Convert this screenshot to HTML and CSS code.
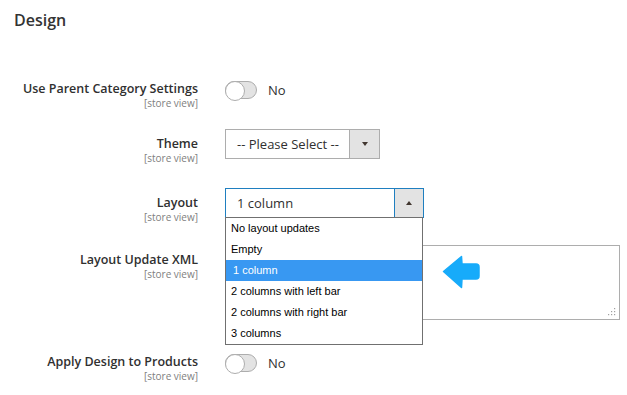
FILE: index.html
```html
<!DOCTYPE html>
<html lang="en">
<head>
<meta charset="utf-8">
<title>Design</title>
<link rel="stylesheet" href="styles.css">
</head>
<body>
<main class="page">
  <h2 class="title">Design</h2>
  <div class="fields">
    <div class="field field-switch field-first">
      <div class="label"><span class="label-text">Use Parent Category Settings</span><span class="scope">[store view]</span></div>
      <div class="control control-switch">
        <span class="toggle"></span><span class="toggle-text">No</span>
      </div>
    </div>

    <div class="field">
      <div class="label"><span class="label-text">Theme</span><span class="scope">[store view]</span></div>
      <div class="control">
        <div class="select select-theme">
          <span class="select-value">-- Please Select --</span>
          <span class="select-btn"><span class="tri tri-down"></span></span>
        </div>
      </div>
    </div>

    <div class="field field-layout">
      <div class="label"><span class="label-text">Layout</span><span class="scope">[store view]</span></div>
      <div class="control">
        <div class="select select-layout is-open">
          <span class="select-value">1 column</span>
          <span class="select-btn"><span class="tri tri-up"></span></span>
          <ul class="options">
            <li class="option">No layout updates</li>
            <li class="option">Empty</li>
            <li class="option is-selected">1 column</li>
            <li class="option">2 columns with left bar</li>
            <li class="option">2 columns with right bar</li>
            <li class="option">3 columns</li>
          </ul>
        </div>
      </div>
    </div>

    <div class="field">
      <div class="label"><span class="label-text">Layout Update XML</span><span class="scope">[store view]</span></div>
      <div class="control">
        <div class="textarea">
          <svg class="pointer" width="38" height="34" viewBox="0 0 38 34" aria-hidden="true">
            <path d="M1.5 16.5 L19.5 1.5 L20 9 L34 9 Q37 9 37 12 L37 21 Q37 24 34 24 L20 24 L19.5 32.5 Z" fill="#17abfa" stroke="#17abfa" stroke-width="1.5" stroke-linejoin="round"/>
          </svg>
          <svg class="grip" width="8" height="8" viewBox="0 0 8 8" aria-hidden="true">
            <rect x="6" y="0" width="1.2" height="1.2" fill="#a0a0a0"/>
            <rect x="3" y="3" width="1.2" height="1.2" fill="#a0a0a0"/>
            <rect x="6" y="3" width="1.2" height="1.2" fill="#a0a0a0"/>
            <rect x="0" y="6" width="1.2" height="1.2" fill="#a0a0a0"/>
            <rect x="3" y="6" width="1.2" height="1.2" fill="#a0a0a0"/>
            <rect x="6" y="6" width="1.2" height="1.2" fill="#a0a0a0"/>
          </svg>
        </div>
      </div>
    </div>

    <div class="field field-switch field-last">
      <div class="label"><span class="label-text">Apply Design to Products</span><span class="scope">[store view]</span></div>
      <div class="control control-switch">
        <span class="toggle"></span><span class="toggle-text">No</span>
      </div>
    </div>
  </div>
</main>
</body>
</html>
```

FILE: styles.css
```css
* { box-sizing: border-box; }

html, body {
  margin: 0;
  padding: 0;
  background: #ffffff;
}

body {
  font-family: "Open Sans", "Noto Sans", sans-serif;
  color: #303030;
  width: 627px;
  height: 395px;
  overflow: hidden;
}

.page {
  padding-top: 10px;
}

.title {
  margin: 0 0 0 14px;
  font-size: 16px;
  line-height: 20px;
  font-weight: 600;
  color: #333333;
}

.fields {
  margin-top: 47px;
  display: flex;
  flex-direction: column;
  gap: 22px;
}

.field {
  display: flex;
  align-items: flex-start;
  gap: 27px;
}

.field-first {
  margin-bottom: -2px;
}

.field-layout {
  margin-top: 2px;
}

.field-last {
  margin-top: 8px;
}

.label {
  width: 198px;
  flex: none;
  display: flex;
  flex-direction: column;
  align-items: flex-end;
  text-align: right;
  padding-top: 7px;
}

.field-switch .label {
  padding-top: 4px;
}

.label-text {
  font-size: 12.5px;
  line-height: 16px;
  font-weight: 600;
  color: #303030;
}

.scope {
  font-size: 10px;
  line-height: 12px;
  color: #808080;
}

.control {
  flex: none;
}

.control-switch {
  height: 26px;
  display: flex;
  align-items: center;
}

.toggle {
  position: relative;
  display: block;
  width: 32px;
  height: 18px;
  border: 1px solid #adadad;
  border-radius: 10px;
  background: #e3e3e3;
}

.toggle::before {
  content: "";
  position: absolute;
  left: -1px;
  top: -1px;
  width: 18px;
  height: 18px;
  border: 1px solid #adadad;
  border-radius: 50%;
  background: #ffffff;
}

.toggle-text {
  margin-left: 11px;
  font-size: 13px;
  line-height: 18px;
  color: #303030;
}

.select {
  position: relative;
  display: flex;
  height: 30px;
  border: 1px solid #adadad;
  background: #ffffff;
}

.select-theme { width: 155px; }

.select-layout {
  width: 199px;
  border-color: #1f7fc0;
}

.select-value {
  flex: 1;
  padding-left: 11px;
  font-size: 13px;
  line-height: 28px;
  color: #303030;
  white-space: nowrap;
}

.select-btn {
  width: 30px;
  flex: none;
  display: flex;
  align-items: center;
  justify-content: center;
  background: #e3e3e3;
  border-left: 1px solid #adadad;
}

.select-layout .select-btn {
  width: 29px;
  border-left-color: #1f7fc0;
}

.tri {
  display: block;
  width: 0;
  height: 0;
  border-left: 3.5px solid transparent;
  border-right: 3.5px solid transparent;
}

.tri-down { border-top: 4px solid #41362f; }
.tri-up { border-bottom: 4px solid #41362f; }

.options {
  position: absolute;
  z-index: 10;
  left: -1px;
  top: 28px;
  width: 198px;
  margin: 0;
  padding: 0;
  list-style: none;
  background: #ffffff;
  border: 1px solid #707070;
}

.option {
  height: 21px;
  line-height: 21px;
  padding-left: 5px;
  font-family: "Liberation Sans", Arial, sans-serif;
  font-size: 11px;
  color: #000000;
  white-space: nowrap;
}

.option.is-selected {
  background: #3898f2;
  color: #ffffff;
  padding-left: 7px;
}

.textarea {
  position: relative;
  width: 395px;
  height: 75px;
  border: 1px solid #adadad;
  background: #ffffff;
}

.pointer {
  position: absolute;
  left: 216px;
  top: 9px;
}

.grip {
  position: absolute;
  right: 3px;
  bottom: 3px;
}
```
